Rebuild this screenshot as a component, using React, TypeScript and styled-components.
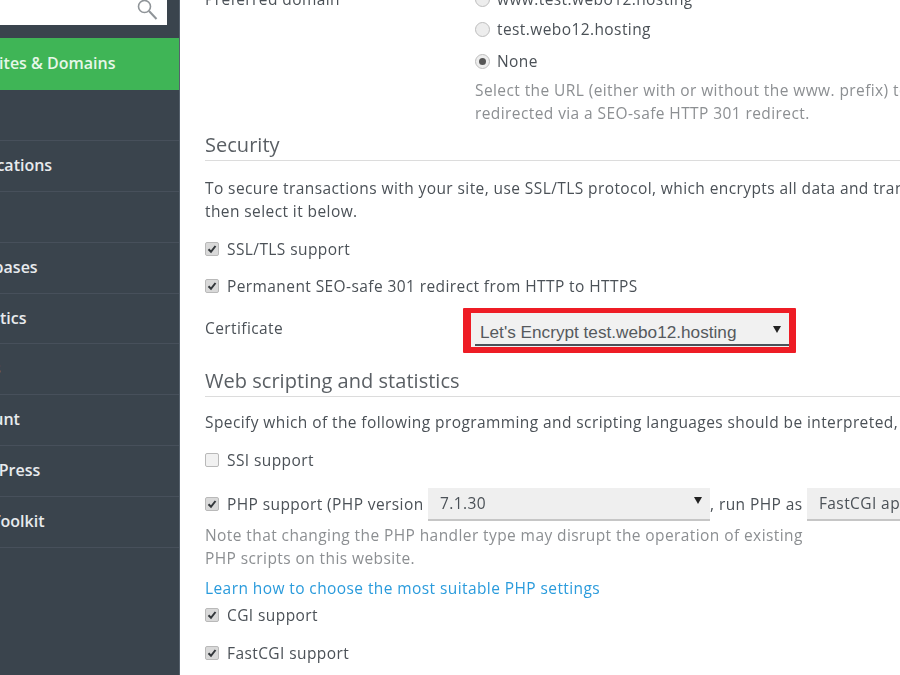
import React from 'react';
import styled, { createGlobalStyle } from 'styled-components';

const GlobalStyle = createGlobalStyle`
  html, body {
    margin: 0;
    padding: 0;
    background: #fff;
    overflow: hidden;
  }
  * { box-sizing: border-box; }
`;

const Page = styled.div`
  display: grid;
  grid-template-columns: 180px 1fr;
  width: 900px;
  height: 675px;
  overflow: hidden;
  font-family: 'Open Sans', sans-serif;
  font-size: 15.5px;
  color: #4b5157;
  letter-spacing: 0.41px;
  filter: blur(0.3px);
`;

const Sidebar = styled.aside`
  background: #3a444d;
  border-right: 1px solid #56616c;
  overflow: hidden;
`;

const SearchBox = styled.div`
  display: flex;
  justify-content: flex-end;
  align-items: flex-start;
  width: 167px;
  height: 25px;
  padding: 0 8px 0 0;
  margin-bottom: 13px;
  background: #fff;
  color: #8f9498;
`;

const NavItem = styled.div<{ $active?: boolean }>`
  display: flex;
  align-items: center;
  height: ${(p) => (p.$active ? '52px' : '50.9px')};
  padding-bottom: 2px;
  background: ${(p) => (p.$active ? '#3fb556' : 'transparent')};
  border-bottom: ${(p) => (p.$active ? 'none' : '1px solid #47505b')};
  color: ${(p) => (p.$active ? '#e6f7e8' : '#e8ebee')};
  font-size: 16px;
  font-weight: 600;
  letter-spacing: 0;
  white-space: nowrap;
`;

const NavLabel = styled.span`
  margin-left: -43px;
`;

const Main = styled.main`
  min-width: 0;
  overflow: hidden;
  padding: 0 0 0 25px;
`;

const Scroller = styled.div`
  margin-top: -15px;
  width: 900px;
`;

const FormRow = styled.div<{ $h?: number; $top?: number }>`
  display: flex;
  align-items: center;
  height: ${(p) => p.$h ?? 37}px;
  margin-top: ${(p) => p.$top ?? 0}px;
  white-space: nowrap;
`;

const FieldLabel = styled.div`
  width: 270px;
  flex: none;
`;

const RadioColumn = styled.div`
  margin-left: 270px;
`;

const RadioDot = styled.span<{ $on?: boolean }>`
  display: inline-flex;
  align-items: center;
  justify-content: center;
  flex: none;
  width: 15px;
  height: 15px;
  margin-right: 7px;
  border-radius: 50%;
  border: 1px solid #bdbdbd;
  background: #ededed;
  &::after {
    content: '';
    display: ${(p) => (p.$on ? 'block' : 'none')};
    width: 7px;
    height: 7px;
    border-radius: 50%;
    background: #555;
  }
`;

const Hint = styled.p<{ $top?: number }>`
  margin: ${(p) => p.$top ?? 0}px 0 0;
  color: #8c8f92;
  line-height: 23px;
  white-space: nowrap;
`;

const SectionTitle = styled.h2<{ $top: number }>`
  margin: ${(p) => p.$top}px 0 0;
  height: 30px;
  border-bottom: 1px solid #dcdcdc;
  font-size: 20px;
  font-weight: 400;
  line-height: 28px;
  letter-spacing: 0.03px;
  color: #5a5f64;
`;

const Paragraph = styled.p<{ $top: number }>`
  margin: ${(p) => p.$top}px 0 0;
  line-height: 23px;
  white-space: nowrap;
`;

const CheckBox = styled.span<{ $on?: boolean }>`
  display: inline-flex;
  align-items: center;
  justify-content: center;
  flex: none;
  width: 14px;
  height: 14px;
  margin-right: 8px;
  border-radius: 2px;
  border: 1px solid #b9b9b9;
  background: ${(p) => (p.$on ? '#d9d9d9' : '#f1f1f1')};
  color: #33373b;
`;

const CertFrame = styled.div`
  flex: none;
  width: 333px;
  height: 45px;
  margin: 5px 0 0 -12px;
  padding: 5px 7px 6px 8px;
  background: #ee1c25;
  border-radius: 1px;
`;

const CertSelect = styled.div`
  position: relative;
  display: flex;
  align-items: center;
  justify-content: space-between;
  height: 34px;
  padding: 5px 8px 0 9px;
  background: #f1f1f1;
  font-family: 'Liberation Sans', sans-serif;
  font-size: 17.2px;
  letter-spacing: 0;
  color: #55595d;
  &::after {
    content: '';
    position: absolute;
    left: 4px;
    right: 0;
    bottom: 1px;
    height: 2px;
    background: #4a5259;
  }
`;

const Arrow = styled.span`
  width: 0;
  height: 0;
  margin-top: -6px;
  border-left: 4px solid transparent;
  border-right: 4px solid transparent;
  border-top: 7px solid #222;
`;

const GraySelect = styled.div<{ $w: number }>`
  display: flex;
  align-items: center;
  justify-content: space-between;
  flex: none;
  width: ${(p) => p.$w}px;
  height: 33px;
  padding: 0 8px 0 12px;
  background: #efefef;
  border-bottom: 2px solid #c6c6c6;
  color: #4b5157;
`;

const Link = styled.a`
  color: #2a9bdc;
  line-height: 23px;
`;

const LinkRow = styled.div`
  margin-top: 7px;
  height: 23px;
`;

function Check({ on }: { on?: boolean }) {
  return (
    <CheckBox $on={on}>
      {on && (
        <svg width="10" height="10" viewBox="0 0 10 10" fill="none" stroke="currentColor" strokeWidth="2">
          <path d="M1.5 5.2 4 7.8 8.5 2" />
        </svg>
      )}
    </CheckBox>
  );
}

const navItems = ['Mail', 'Applications', 'Files', 'Databases', 'Statistics', 'Users', 'Account', 'WordPress', 'SEO Toolkit'];

export default function App() {
  return (
    <Page>
      <GlobalStyle />
      <Sidebar>
        <SearchBox>
          <svg width="24" height="24" viewBox="0 0 24 24" fill="none" stroke="currentColor" strokeWidth="1.6" style={{ marginTop: -2 }}>
            <circle cx="9.5" cy="8.5" r="6" />
            <path d="M14 13l7.5 8" strokeWidth="2" />
          </svg>
        </SearchBox>
        <NavItem $active>
          <NavLabel>Websites &amp; Domains</NavLabel>
        </NavItem>
        {navItems.map((label) => (
          <NavItem key={label}>
            <NavLabel>{label}</NavLabel>
          </NavItem>
        ))}
      </Sidebar>
      <Main>
        <Scroller>
          <FormRow $h={28}>
            <FieldLabel>Preferred domain</FieldLabel>
            <RadioDot />
            www.test.webo12.hosting
          </FormRow>
          <RadioColumn>
            <FormRow $h={32}>
              <RadioDot />
              test.webo12.hosting
            </FormRow>
            <FormRow $h={32}>
              <RadioDot $on />
              None
            </FormRow>
            <Hint $top={2}>Select the URL (either with or without the www. prefix) to which site visitors will be</Hint>
            <Hint>redirected via a SEO-safe HTTP 301 redirect.</Hint>
          </RadioColumn>

          <SectionTitle $top={6}>Security</SectionTitle>
          <Paragraph $top={16}>
            To secure transactions with your site, use SSL/TLS protocol, which encrypts all data and transfers it over a secure connection,
            <br />
            then select it below.
          </Paragraph>
          <FormRow $top={7}>
            <Check on />
            SSL/TLS support
          </FormRow>
          <FormRow>
            <Check on />
            Permanent SEO-safe 301 redirect from HTTP to HTTPS
          </FormRow>
          <FormRow $h={47}>
            <FieldLabel>Certificate</FieldLabel>
            <CertFrame>
              <CertSelect>
                Let's Encrypt test.webo12.hosting
                <Arrow />
              </CertSelect>
            </CertFrame>
          </FormRow>

          <SectionTitle $top={16}>Web scripting and statistics</SectionTitle>
          <Paragraph $top={14}>
            Specify which of the following programming and scripting languages should be interpreted, executed or otherwise processed by your web server.
          </Paragraph>
          <FormRow $top={7}>
            <Check />
            SSI support
          </FormRow>
          <FormRow $h={40} $top={6}>
            <Check on />
            PHP support (PHP version&nbsp;
            <GraySelect $w={282}>
              7.1.30
              <Arrow />
            </GraySelect>
            , run PHP as&nbsp;
            <GraySelect $w={200}>FastCGI application</GraySelect>
          </FormRow>
          <Hint>
            Note that changing the PHP handler type may disrupt the operation of existing
            <br />
            PHP scripts on this website.
          </Hint>
          <LinkRow>
            <Link>Learn how to choose the most suitable PHP settings</Link>
          </LinkRow>
          <FormRow $top={-4}>
            <Check on />
            CGI support
          </FormRow>
          <FormRow $h={39}>
            <Check on />
            FastCGI support
          </FormRow>
        </Scroller>
      </Main>
    </Page>
  );
}
